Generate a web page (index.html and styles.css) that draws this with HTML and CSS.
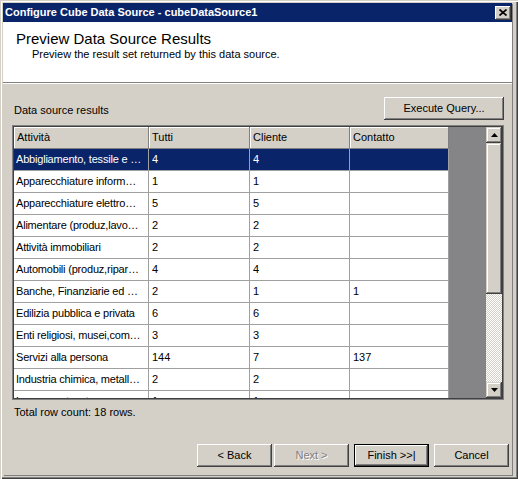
FILE: index.html
```html
<!DOCTYPE html>
<html>
<head>
<meta charset="utf-8">
<link rel="stylesheet" href="styles.css">
</head>
<body>
<div class="window">
  <div class="client">
    <div class="titlebar">
      <span class="title">Configure Cube Data Source - cubeDataSource1</span>
      <div class="close"><svg width="8" height="7" viewBox="0 0 8 7"><path d="M0.5 0.5L7.5 6.5M7.5 0.5L0.5 6.5" stroke="#000" stroke-width="1.7"/></svg></div>
    </div>
    <div class="header">
      <div class="h-title">Preview Data Source Results</div>
      <div class="h-sub">Preview the result set returned by this data source.</div>
    </div>
    <div class="sep"></div>
    <div class="body">
      <div class="toprow">
        <span class="label">Data source results</span>
        <div class="btn exec">Execute Query...</div>
      </div>
      <div class="table">
        <div class="inner">
          <div class="cells">
            <div class="hc">Attività</div><div class="hc">Tutti</div><div class="hc">Cliente</div><div class="hc">Contatto</div>
            <div class="c c1 sel">Abbigliamento, tessile e …</div><div class="c sel">4</div><div class="c sel">4</div><div class="c sel"></div>
            <div class="c c1">Apparecchiature inform…</div><div class="c">1</div><div class="c">1</div><div class="c"></div>
            <div class="c c1">Apparecchiature elettro…</div><div class="c">5</div><div class="c">5</div><div class="c"></div>
            <div class="c c1">Alimentare (produz,lavo…</div><div class="c">2</div><div class="c">2</div><div class="c"></div>
            <div class="c c1">Attività immobiliari</div><div class="c">2</div><div class="c">2</div><div class="c"></div>
            <div class="c c1">Automobili (produz,ripar…</div><div class="c">4</div><div class="c">4</div><div class="c"></div>
            <div class="c c1">Banche, Finanziarie ed …</div><div class="c">2</div><div class="c">1</div><div class="c">1</div>
            <div class="c c1">Edilizia pubblica e privata</div><div class="c">6</div><div class="c">6</div><div class="c"></div>
            <div class="c c1">Enti religiosi, musei,com…</div><div class="c">3</div><div class="c">3</div><div class="c"></div>
            <div class="c c1">Servizi alla persona</div><div class="c">144</div><div class="c">7</div><div class="c">137</div>
            <div class="c c1">Industria chimica, metall…</div><div class="c">2</div><div class="c">2</div><div class="c"></div>
            <div class="c c1">Legno, carta, stampa…</div><div class="c">1</div><div class="c">1</div><div class="c"></div>
          </div>
          <div class="empty"></div>
          <div class="scroll">
            <div class="sb"><svg width="7" height="4" viewBox="0 0 7 4"><path d="M3.5 0L7 4H0z" fill="#000"/></svg></div>
            <div class="thumb"></div>
            <div class="track"></div>
            <div class="sb"><svg width="7" height="4" viewBox="0 0 7 4"><path d="M0 0H7L3.5 4z" fill="#000"/></svg></div>
          </div>
        </div>
      </div>
      <div class="total">Total row count: 18 rows.</div>
      <div class="footer">
        <div class="btn">&lt; Back</div>
        <div class="btn next disabled">Next &gt;</div>
        <div class="btn def">Finish &gt;&gt;|</div>
        <div class="btn">Cancel</div>
      </div>
    </div>
  </div>
</div>
</body>
</html>
```
FILE: styles.css
```css
* { box-sizing: border-box; margin: 0; padding: 0; }
body {
  margin: 0;
  background: #d4d0c8;
  font-family: "Liberation Sans", Arial, sans-serif;
  font-size: 11px;
  color: #000;
}
.window {
  width: 518px;
  height: 479px;
  padding: 3px 6px 4px 3px;
  background: #d4d0c8;
  box-shadow: inset 1px 1px #d4d0c8, inset 2px 2px #fff, inset -1px -1px #404040, inset -2px -2px #808080;
}
.client {
  height: 100%;
  display: flex;
  flex-direction: column;
  box-shadow: 1px 1px 0 #808080;
}
.titlebar {
  height: 19px;
  flex: none;
  background: #0a246a;
  color: #fff;
  font-weight: bold;
  line-height: 19px;
  display: flex;
  align-items: center;
  justify-content: space-between;
  padding: 0 1px 0 2px;
}
.close {
  width: 16px;
  height: 14px;
  background: #d4d0c8;
  display: flex;
  align-items: center;
  justify-content: center;
  box-shadow: inset -1px -1px #404040, inset 1px 1px #fff, inset -2px -2px #808080;
}
.header {
  height: 60px;
  flex: none;
  background: #fff;
  padding: 8px 0 0 13px;
}
.h-title { font-size: 15px; line-height: 18px; }
.h-sub { padding-left: 16px; line-height: 13px; }
.sep {
  height: 2px;
  flex: none;
  border-top: 1px solid #808080;
  border-bottom: 1px solid #fff;
}
.body {
  flex: 1;
  display: flex;
  flex-direction: column;
  padding: 13px 8px 8px 9px;
}
.toprow {
  display: flex;
  justify-content: space-between;
  align-items: flex-end;
  height: 23px;
}
.label { padding-left: 2px; line-height: 13px; margin-bottom: 3px; }
.btn {
  width: 75px;
  height: 23px;
  background: #d4d0c8;
  text-align: center;
  line-height: 23px;
  box-shadow: inset -1px -1px #404040, inset 1px 1px #fff, inset -2px -2px #808080, inset 2px 2px #d4d0c8;
}
.exec { width: 120px; }
.def {
  border: 1px solid #000;
  line-height: 21px;
}
.disabled { color: #808080; text-shadow: 1px 1px 0 #fff; }
.table {
  margin-top: 5px;
  height: 275px;
  border: 1px solid #808080;
}
.inner {
  height: 100%;
  border: 1px solid #404040;
  display: flex;
  background: #858486;
}
.cells {
  width: 435px;
  height: 271px;
  overflow: hidden;
  display: grid;
  grid-template-columns: 135px 101px 100px 99px;
  grid-auto-rows: 22px;
  align-content: start;
}
.hc {
  background: #d4d0c8;
  border-right: 1px solid #808080;
  border-bottom: 1px solid #808080;
  box-shadow: inset 1px 1px #fff;
  padding-left: 3px;
  line-height: 21px;
}
.c {
  background: #fff;
  border-right: 1px solid #a0a0a0;
  border-bottom: 1px solid #a0a0a0;
  padding-left: 3px;
  line-height: 21px;
  white-space: nowrap;
  overflow: hidden;
}
.c1 { padding-left: 2px; letter-spacing: -0.2px; }
.c.sel { background: #0a246a; color: #fff; }
.empty { flex: 1; }
.scroll {
  width: 16px;
  display: flex;
  flex-direction: column;
}
.sb, .thumb {
  background: #d4d0c8;
  box-shadow: inset -1px -1px #404040, inset 1px 1px #d4d0c8, inset -2px -2px #808080, inset 2px 2px #fff;
}
.sb {
  height: 16px;
  flex: none;
  display: flex;
  align-items: center;
  justify-content: center;
}
.thumb { height: 151px; flex: none; }
.track {
  flex: 1;
  background: repeating-conic-gradient(#d4d0c8 0 25%, #fff 0 50%) 0 0 / 2px 2px;
}
.total { margin-top: 6px; padding-left: 2px; line-height: 13px; }
.footer {
  margin-top: auto;
  margin-right: -5px;
  display: flex;
  justify-content: flex-end;
}
.next { margin-left: 2px; }
.def { margin-left: 5px; }
.def + .btn { margin-left: 5px; }
```
